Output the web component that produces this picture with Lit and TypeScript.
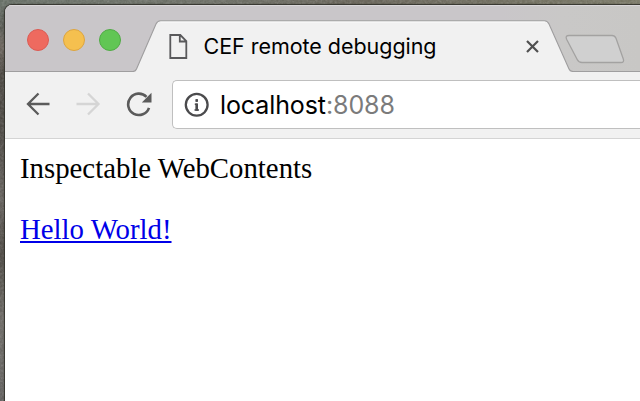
import { LitElement, html, css } from "lit";
import { customElement } from "lit/decorators.js";

@customElement("browser-tabs")
class BrowserTabs extends LitElement {
  static styles = css`
    :host { display: block; height: 67px; }
    .strip { position: relative; display: flex; align-items: flex-start; height: 67px;
      background: linear-gradient(90deg, #c9c6c9 0, #c9c6c9 78%, #c9c8c7 88%, #c8c7c5 100%); }
    .shape { position: absolute; left: 0; top: 0; width: 635px; height: 67px; }
    .lights { position: relative; display: flex; gap: 14px; padding: 24px 0 0 22px; width: 115px; }
    .light { box-sizing: border-box; width: 22px; height: 22px; border-radius: 50%; border: 1px solid; }
    .red { background: #ee6a5f; border-color: #dc5b54; }
    .yellow { background: #f5c04f; border-color: #dda53f; }
    .green { background: #61c654; border-color: #50ab45; }
    .tab { position: relative; display: flex; align-items: center; margin: 16px 0 0 26px; height: 51px; width: 374px; }
    .page { width: 20px; height: 27px; }
    .title { margin: 0 0 2px 15.5px; width: 321.5px; font: 21.5px/28px Inter, sans-serif; letter-spacing: -0.04px; color: #000; white-space: nowrap; }
    .close { width: 15px; height: 15px; flex: none; }
  `;
  render() {
    return html`<div class="strip">
      <svg class="shape" viewBox="0 0 635 67">
        <path d="M0 .5H635" stroke="#dad8da" />
        <path d="M0 67V66.500H128Q130.500 66.500 131.500 64L151 19Q152.500 15.700 155.500 15.700H539.500Q542.500 15.700 544 19L564 64Q565 66.500 568 66.500H635V67Z" fill="#f1f1f1" />
        <path d="M155.500 17H540" stroke="#fcfcfc" />
        <path d="M0 66.500H128Q130.500 66.500 131.500 64L151 19Q152.500 15.700 155.500 15.700H539.500Q542.500 15.700 544 19L564 64Q565 66.500 568 66.500H635" fill="none" stroke="#9f9e9f" stroke-width="1.100" />
        <path d="M564 30.500H607Q609.700 30.500 611 33.200L618.300 54Q619.500 57.500 616 57.500H577Q573.700 57.500 572.200 54.500L561.600 34.200Q560 30.500 564 30.500Z" fill="#d0d0d0" stroke="#a3a2a1" stroke-width="1.300" />
      </svg>
      <div class="lights"><span class="light red"></span><span class="light yellow"></span><span class="light green"></span></div>
      <div class="tab">
        <svg class="page" viewBox="0 0 20 27"><path d="M2.300 2H12.300L18.300 8V25H2.300ZM11.800 2V8.500H18.300" fill="none" stroke="#59595b" stroke-width="1.800" /></svg>
        <span class="title">CEF remote debugging</span>
        <svg class="close" viewBox="0 0 15 15"><path d="M2 2L13 13M13 2L2 13" stroke="#505050" stroke-width="2.200" /></svg>
      </div>
    </div>`;
  }
}

@customElement("browser-toolbar")
class BrowserToolbar extends LitElement {
  static styles = css`
    :host { display: block; }
    .bar { box-sizing: border-box; display: flex; height: 67px; padding: 8px 0 0 20px; background: #f1f1f1; border-bottom: 1px solid #d4d4d4; }
    .icon { width: 26px; height: 26px; margin: 11px 24px 0 0; flex: none; }
    .reload { margin: 11px 20px 0 1px; }
    .address { box-sizing: border-box; display: flex; align-items: center; flex: 1; height: 49px; padding-left: 11px;
      background: #fff; border: 1px solid #bfbfbf; border-right: 0; border-radius: 5px 0 0 5px; }
    .info { width: 26px; height: 26px; flex: none; }
    .url { margin: 1px 0 0 10px; font: 25px/32px Inter, sans-serif; letter-spacing: -.1px; color: #000; white-space: nowrap; }
    .port { color: #7b7b7b; }
  `;
  render() {
    return html`<div class="bar">
      <svg class="icon" viewBox="0 0 26 26"><path d="M24.500 13H3M13.500 2.500L3 13L13.500 23.500" fill="none" stroke="#5b5b5b" stroke-width="2.300" /></svg>
      <svg class="icon" viewBox="0 0 26 26"><path d="M1.500 13H23.500M13 2.500L23.500 13L13 23.500" fill="none" stroke="#d5d5d5" stroke-width="2.300" /></svg>
      <svg class="icon reload" viewBox="0 0 26 26"><path d="M23 16.800A10.700 10.700 0 1 1 20.500 5.800" fill="none" stroke="#5b5b5b" stroke-width="2.600" /><path d="M25.500 1.800V11.500H15.800Z" fill="#5b5b5b" /></svg>
      <div class="address">
        <svg class="info" viewBox="0 0 26 26"><circle cx="12.700" cy="12.800" r="10.900" fill="none" stroke="#4b4b4d" stroke-width="2.300" /><path d="M12.700 7.200V9.700M12.700 11.500V18.800M10.800 12.300H12.700M10.500 18H15" stroke="#4b4b4d" stroke-width="1.500" /><path d="M12.700 7.200V9.700M12.700 11.500V18.800" stroke="#4b4b4d" stroke-width="2.600" /></svg>
        <span class="url">localhost<span class="port">:8088</span></span>
      </div>
    </div>`;
  }
}

@customElement("app-root")
class AppRoot extends LitElement {
  static styles = css`
    :host { display: block; width: 640px; height: 401px; overflow: hidden; }
    .desktop { box-sizing: border-box; position: relative; width: 640px; height: 401px; padding: 5px 0 0 5px;
      background: linear-gradient(90deg, #626b61 0, #67695f 35%, #625e52 55%, #74735f 100%) top / 100% 6px no-repeat,
        linear-gradient(#626b61 0, #4d5049 25px, #665e56 45px, #423e38 75px, #48443f 140px, #5e5a55 200px, #45413b 255px, #686560 320px, #5b5957 401px); }
    .grain { position: absolute; left: 0; top: 0; width: 640px; height: 401px; opacity: .3; }
    .window { position: relative; height: 396px; overflow: hidden; border-radius: 7px 0 0 0; background: #fff; box-shadow: 0 0 1px 1px #33332d; }
    .content { padding: 13px 15px; font: 28.800px/33px "Liberation Serif", serif; color: #000; }
    .line { margin: 0 0 28px; white-space: nowrap; }
    .link { color: #0000e8; text-decoration: underline; text-decoration-thickness: 2px; text-underline-offset: 2px; }
  `;
  render() {
    return html`<div class="desktop">
      <svg class="grain"><filter id="n"><feTurbulence type="fractalNoise" baseFrequency=".4" numOctaves="3" /><feColorMatrix type="saturate" values="0" /></filter><rect width="640" height="401" filter="url(#n)" /></svg>
      <div class="window">
        <browser-tabs></browser-tabs>
        <browser-toolbar></browser-toolbar>
        <div class="content"><p class="line">Inspectable WebContents</p><p class="line"><a class="link">Hello World!</a></p></div>
      </div>
    </div>`;
  }
}
